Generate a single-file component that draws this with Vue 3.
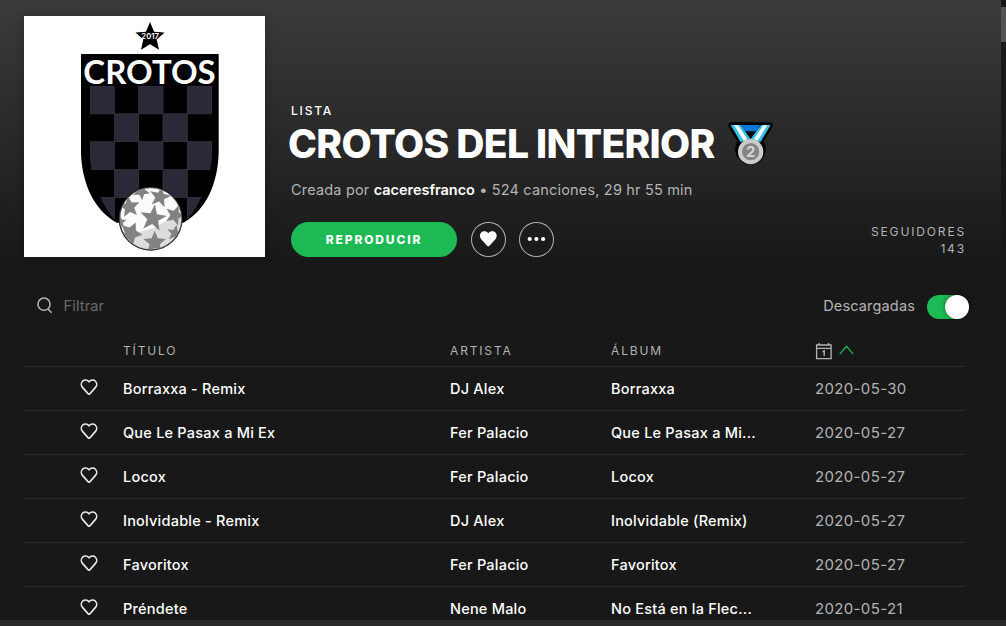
<template>
  <div class="playlist">
    <header class="header">
      <svg class="cover" viewBox="30 30 723 723">
        <defs>
          <clipPath id="shield">
            <path d="M227 239H594V440C592 500 574 575 520 640H300C248 575 229 500 227 440Z" />
          </clipPath>
          <clipPath id="ball">
            <circle cx="410" cy="638" r="92" />
          </clipPath>
        </defs>
        <rect x="30" y="30" width="723" height="723" fill="#fff" />
        <polygon :points="starPoints(408, 94, 46, 21, 0)" fill="#000" />
        <text class="crest-year" x="382" y="98" textLength="53" lengthAdjust="spacingAndGlyphs">2017</text>
        <path d="M201 144H614V440C612 525 580 610 508 650H308C236 610 203 525 201 440Z" fill="#000" />
        <g clip-path="url(#shield)" fill="#2b2838" stroke="#3a3842" stroke-width="2">
          <rect v-for="s in squares" :key="s.id" :x="s.x" :y="s.y" width="73" height="83.5" />
        </g>
        <text class="crest-name" x="208" y="235" textLength="397" lengthAdjust="spacingAndGlyphs">CROTOS</text>
        <circle cx="410" cy="638" r="96" fill="#111" />
        <g clip-path="url(#ball)">
          <rect x="310" y="540" width="200" height="200" fill="#fbfbfb" />
          <path d="M372 680L425 664 450 648 478 640 510 600V740H330V690Z" fill="#dcdddf" />
          <polygon
            v-for="(s, i) in ballStars"
            :key="i"
            :points="starPoints(...s)"
            fill="#838383"
          />
        </g>
        <circle cx="410" cy="638" r="93" fill="none" stroke="#777" stroke-width="2" />
      </svg>

      <div class="info">
        <div class="kind">LISTA</div>
        <h1 class="title">
          <span>CROTOS DEL INTERIOR</span>
          <svg class="medal" viewBox="594 60 138 141">
            <path
              d="M602 64H722Q731 67 728 77L701 121A46 46 0 1 1 622 121L595 77Q593 67 602 64Z"
              fill="#000"
            />
            <path d="M632 72H690L679 91H645Z" fill="#0f74d8" />
            <path d="M602 72H632L661 113 645 119 632 124Z" fill="#35bfe9" />
            <path d="M722 72H693L662 113 678 119 691 124Z" fill="#35bfe9" />
            <path d="M612 72H624L652 114 641 119Z" fill="#f4fbff" />
            <path d="M712 72H700L672 114 683 119Z" fill="#f4fbff" />
            <path d="M648 94H676L662 112Z" fill="#000" />
            <circle cx="662" cy="152" r="38" fill="#cbcbcb" />
            <circle cx="662" cy="152" r="26" fill="#858585" />
            <text class="medal-number" x="662" y="168">2</text>
          </svg>
        </h1>
        <div class="meta">
          Creada por <strong>caceresfranco</strong> • 524 canciones, 29 hr 55 min
        </div>
        <div class="actions">
          <button class="play">REPRODUCIR</button>
          <button class="round">
            <svg width="35" height="35" viewBox="0 0 35 35">
              <path
                d="M17.3 11.2C19.4 8.8 22.6 8.8 24.4 10.6C26.2 12.5 26.1 15.3 24.4 17.2L18.5 23.8Q17.3 24.9 16.1 23.8L10.2 17.2C8.5 15.3 8.4 12.5 10.2 10.6C12 8.8 15.2 8.8 17.3 11.2Z"
                fill="#fff"
              />
            </svg>
          </button>
          <button class="round">
            <svg width="35" height="35" viewBox="0 0 35 35" fill="#fff">
              <circle cx="10.7" cy="17" r="2.1" />
              <circle cx="17.4" cy="17" r="2.1" />
              <circle cx="24.1" cy="17" r="2.1" />
            </svg>
          </button>
        </div>
      </div>

      <div class="followers">
        <div>SEGUIDORES</div>
        <div class="count">143</div>
      </div>
    </header>

    <div class="toolbar">
      <svg class="search" width="16" height="17" viewBox="0 0 16 17">
        <circle cx="7" cy="7.2" r="6.1" />
        <path d="M11 12L14.6 15.8" />
      </svg>
      <span class="filter">Filtrar</span>
      <span class="downloaded">Descargadas</span>
      <span class="toggle"><i></i></span>
    </div>

    <div class="row head">
      <span></span>
      <span>TÍTULO</span>
      <span>ARTISTA</span>
      <span>ÁLBUM</span>
      <span class="sort">
        <svg width="40" height="18" viewBox="0 0 40 18" fill="none">
          <path d="M1.6 3H16.1V16.6H1.6ZM1.6 6.4H16.1M4.2 1V3M13.5 1V3" stroke="#b3b3b3" stroke-width="1.3" />
          <path d="M7.6 9.7L9.2 8.9V13.9" stroke="#b3b3b3" stroke-width="1.4" />
          <path d="M24.8 12.2L31.5 4.3 38.2 12.2" stroke="#1db954" stroke-width="1.2" />
        </svg>
      </span>
    </div>

    <div v-for="track in tracks" :key="track.title" class="row track">
      <span class="like">
        <svg width="18" height="17" viewBox="0 0 18 17">
          <path
            d="M9 2.7C10.9 .6 13.7 .6 15.4 2.2C17.1 3.9 17.1 6.6 15.5 8.4L9.8 14.9Q9 15.7 8.2 14.9L2.5 8.4C.9 6.6 .9 3.9 2.6 2.2C4.3 .6 7.1 .6 9 2.7Z"
          />
        </svg>
      </span>
      <span>{{ track.title }}</span>
      <span>{{ track.artist }}</span>
      <span>{{ track.album }}</span>
      <span class="date">{{ track.date }}</span>
    </div>

    <div class="scrollbar"><div class="thumb"></div></div>
    <div class="player-edge"></div>
  </div>
</template>

<script setup>
const tracks = [
  { title: 'Borraxxa - Remix', artist: 'DJ Alex', album: 'Borraxxa', date: '2020-05-30' },
  { title: 'Que Le Pasax a Mi Ex', artist: 'Fer Palacio', album: 'Que Le Pasax a Mi...', date: '2020-05-27' },
  { title: 'Locox', artist: 'Fer Palacio', album: 'Locox', date: '2020-05-27' },
  { title: 'Inolvidable - Remix', artist: 'DJ Alex', album: 'Inolvidable (Remix)', date: '2020-05-27' },
  { title: 'Favoritox', artist: 'Fer Palacio', album: 'Favoritox', date: '2020-05-27' },
  { title: 'Préndete', artist: 'Nene Malo', album: 'No Está en la Flec...', date: '2020-05-21' },
];

// checkered squares of the crest
const squares = [];
for (let r = 0; r < 5; r++) {
  for (let c = 0; c < 5; c++) {
    if ((r + c) % 2 === 0) {
      squares.push({ id: `${r}-${c}`, x: 228 + c * 73, y: 240 + r * 83.5 });
    }
  }
}

// cx, cy, outer radius, inner radius, rotation
const ballStars = [
  [417, 637, 42, 17, 8],
  [438, 573, 34, 14, 12],
  [346, 603, 33, 15, -8],
  [483, 628, 32, 14, 20],
  [350, 682, 36, 18, 25],
  [422, 710, 36, 16, 0],
  [382, 556, 27, 12, 30],
  [483, 682, 26, 11, 10],
  [318, 648, 20, 9, 0],
];

function starPoints(cx, cy, outer, inner, rotation) {
  const points = [];
  for (let i = 0; i < 10; i++) {
    const radius = i % 2 ? inner : outer;
    const angle = ((i * 36 - 90 + rotation) * Math.PI) / 180;
    points.push(`${(cx + radius * Math.cos(angle)).toFixed(1)},${(cy + radius * Math.sin(angle)).toFixed(1)}`);
  }
  return points.join(' ');
}
</script>

<style>
body {
  margin: 0;
  background: #181818;
}
</style>

<style scoped>
.playlist {
  position: relative;
  box-sizing: border-box;
  width: 1006px;
  height: 626px;
  padding: 16px 41px 0 24px;
  overflow: hidden;
  background: linear-gradient(#3b3b3b, #181818 264px);
  color: #fff;
  font-family: Inter, 'Liberation Sans', sans-serif;
  font-size: 14.5px;
}

.header {
  display: flex;
  height: 241px;
}

.cover {
  width: 241px;
  height: 241px;
  box-shadow: 0 0 10px rgba(0, 0, 0, 0.3);
}

.crest-year {
  fill: #fff;
  font: 600 24px Inter, sans-serif;
}

.crest-name {
  fill: #fff;
  font: 700 95px Lato, sans-serif;
}

.info {
  display: flex;
  flex-direction: column;
  justify-content: flex-end;
  margin-left: 26px;
}

.kind {
  height: 18px;
  line-height: 19px;
  font-size: 12px;
  font-weight: 500;
  letter-spacing: 1.8px;
}

.title {
  display: flex;
  align-items: center;
  height: 50px;
  margin: 0 0 10px -3px;
  font-size: 39px;
  font-weight: 800;
  letter-spacing: -0.7px;
  white-space: nowrap;
}

.title span {
  width: 427px;
  line-height: 48px;
}

.medal {
  width: 46px;
  height: 47px;
  margin-left: 13px;
}

.medal-number {
  fill: #d5d5d5;
  font: 700 43px Inter, sans-serif;
  text-anchor: middle;
}

.meta {
  height: 20px;
  margin-bottom: 23px;
  line-height: 21px;
  color: #b3b3b3;
  letter-spacing: 0.18px;
  white-space: nowrap;
}

.meta strong {
  color: #fff;
  font-weight: 600;
  letter-spacing: -0.04px;
}

.actions {
  display: flex;
  height: 35px;
}

button {
  box-sizing: border-box;
  height: 35px;
  padding: 0;
  border: 0;
  color: #fff;
  font-family: inherit;
}

.play {
  width: 166px;
  border-radius: 18px;
  background: #1db954;
  font-size: 12px;
  font-weight: 800;
  letter-spacing: 1.85px;
}

.round {
  width: 35px;
  margin-left: 14px;
  border-radius: 50%;
  background: none;
  box-shadow: inset 0 0 0 1px #b3b3b3;
}

.round + .round {
  margin-left: 13px;
}

.round svg {
  display: block;
}

.followers {
  align-self: flex-end;
  margin-left: auto;
  margin-right: -1px;
  color: #b3b3b3;
  font-size: 12px;
  line-height: 17px;
  letter-spacing: 1.85px;
  text-align: right;
}

.toolbar {
  display: flex;
  align-items: center;
  height: 24px;
  margin: 38px -4px 15px 12px;
  line-height: 22px;
  color: #b3b3b3;
  letter-spacing: 0.16px;
}

.search {
  margin: -3px 11px 0 0.5px;
  fill: none;
  stroke: #b3b3b3;
  stroke-width: 1.5;
}

.filter {
  height: 24px;
  color: #6a6a6a;
}

.downloaded {
  height: 24px;
  margin-left: auto;
}

.toggle {
  display: flex;
  justify-content: flex-end;
  width: 42px;
  height: 24px;
  margin-left: 12px;
  border-radius: 12px;
  background: #1db954;
}

.toggle i {
  width: 24px;
  height: 24px;
  border-radius: 50%;
  background: #fff;
  box-shadow: 0 0 4px rgba(0, 0, 0, 0.5);
}

.row {
  display: grid;
  grid-template-columns: 99px 327px 161px 204px 150px;
  box-sizing: border-box;
  height: 44px;
  border-bottom: 1px solid #282828;
  line-height: 44px;
  white-space: nowrap;
}

.head {
  height: 33px;
  color: #b3b3b3;
  font-size: 12px;
  line-height: 34px;
  letter-spacing: 1.85px;
}

.sort svg {
  display: block;
  margin-top: 8px;
}

.track {
  font-weight: 500;
  letter-spacing: 0.22px;
}

.like svg {
  display: block;
  margin: 12px 0 0 56px;
  fill: none;
  stroke: #e8e8e8;
  stroke-width: 1.6;
}

.date {
  color: #b3b3b3;
  font-weight: 400;
  font-size: 15px;
  letter-spacing: 0.35px;
}

.scrollbar {
  position: absolute;
  top: 0;
  right: 0;
  width: 5px;
  height: 620px;
  background: #181818;
}

.thumb {
  height: 35px;
  margin-top: 7px;
  background: #535353;
}

.player-edge {
  position: absolute;
  left: 0;
  bottom: 0;
  width: 100%;
  height: 6px;
  background: #282828;
}
</style>
